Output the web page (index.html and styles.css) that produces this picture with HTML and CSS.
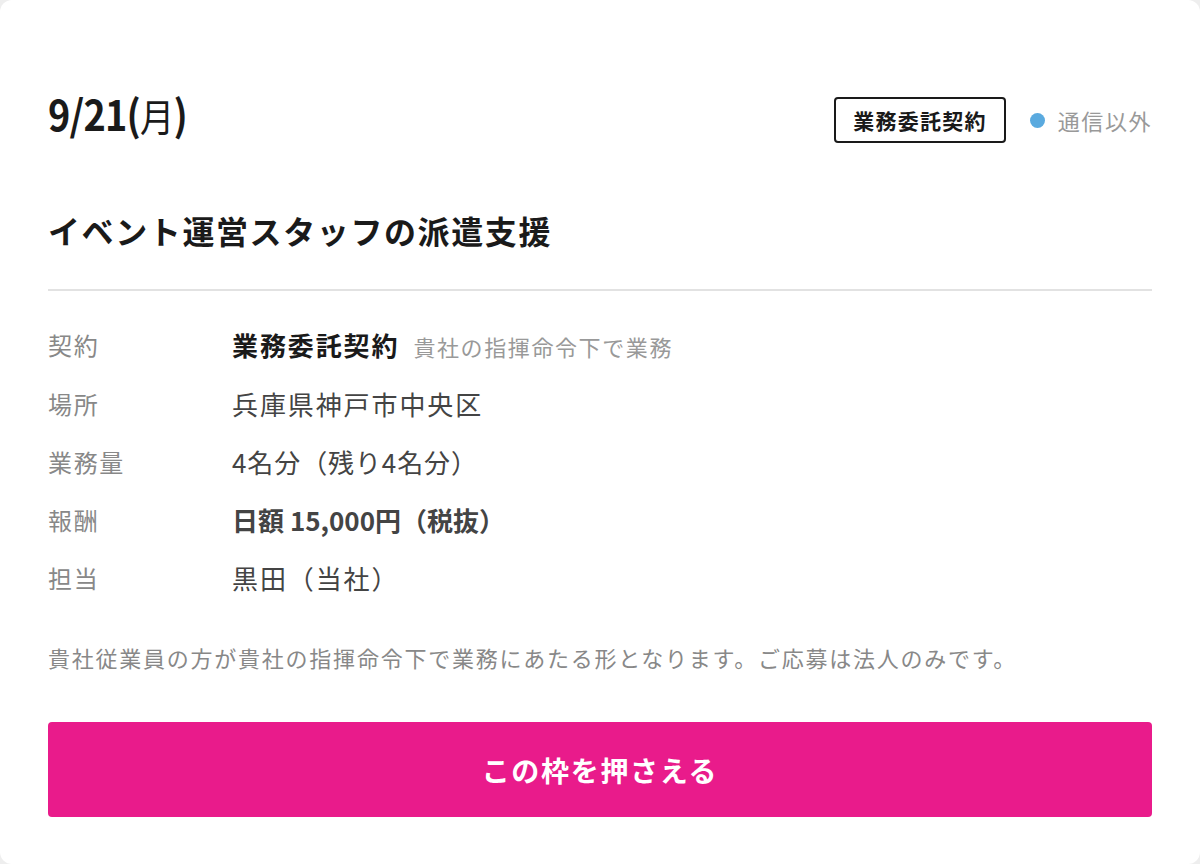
FILE: index.html
```html
<!DOCTYPE html>
<html lang="ja">
<head>
    <meta charset="UTF-8">
    <meta name="viewport" content="width=device-width, initial-scale=1.0">
    <title>枠の詳細</title>
    <link rel="stylesheet" href="styles.css">
</head>
<body>

<div class="card">
    <div class="card-head">
        <h2 class="date"><span class="date-text">9/21(<span class="dow">月</span>)</span></h2>
        <div class="tags">
            <span class="badge">業務委託契約</span>
            <span class="status"><i class="dot"></i>通信以外</span>
        </div>
    </div>

    <h3 class="title">イベント運営スタッフの派遣支援</h3>

    <dl class="details">
        <dt>契約</dt>
        <dd><strong class="strong">業務委託契約</strong><span class="sub">貴社の指揮命令下で業務</span></dd>

        <dt>場所</dt>
        <dd>兵庫県神戸市中央区</dd>

        <dt>業務量</dt>
        <dd class="count">4名分（残り4名分）</dd>

        <dt>報酬</dt>
        <dd class="pay">日額 15,000円（税抜）</dd>

        <dt>担当</dt>
        <dd>黒田（当社）</dd>
    </dl>

    <p class="note">貴社従業員の方が貴社の指揮命令下で業務にあたる形となります。ご応募は法人のみです。</p>

    <button type="button" class="btn">この枠を押さえる</button>
</div>

</body>
</html>
```

FILE: styles.css
```css
body {
    margin: 0;
    background-color: #eeeeee;
    font-family: 'Noto Sans CJK JP', sans-serif;
    color: #333;
}

.card {
    box-sizing: border-box;
    height: 864px;
    background-color: #fff;
    border-radius: 12px;
    padding: 97px 48px 48px;
}

.card-head {
    display: flex;
    justify-content: space-between;
    align-items: center;
    height: 46px;
}

.date {
    margin: -14px 0 0;
    font-size: 42px;
    font-weight: 700;
    line-height: 1;
    color: #1a1a1a;
}

/* condensed look for the date */
.date-text {
    display: inline-block;
    transform: scaleX(0.9);
    transform-origin: left center;
    letter-spacing: -0.02em;
}

.date .dow {
    font-size: 38px;
    font-weight: 400;
}

.tags {
    display: flex;
    align-items: center;
    gap: 24px;
}

.badge {
    box-sizing: border-box;
    height: 46px;
    display: flex;
    align-items: center;
    padding: 0 17px;
    border: 2px solid #1a1a1a;
    border-radius: 4px;
    font-size: 21px;
    font-weight: 700;
    letter-spacing: 0.06em;
    color: #1a1a1a;
}

.status {
    display: flex;
    align-items: center;
    gap: 13px;
    font-size: 22px;
    letter-spacing: 0.07em;
    color: #999;
}

.dot {
    width: 15px;
    height: 15px;
    border-radius: 50%;
    background-color: #5aaadf;
}

.title {
    margin: 63px 0 0;
    font-size: 32px;
    font-weight: 700;
    line-height: 48px;
    letter-spacing: 0.05em;
    color: #1a1a1a;
    padding-bottom: 35px;
    border-bottom: 2px solid #e2e2e2;
}

.details {
    display: grid;
    grid-template-columns: 184px 1fr;
    row-gap: 18px;
    margin: 34px 0 0;
    line-height: 40px;
}

.details dt {
    font-size: 24px;
    letter-spacing: 0.07em;
    color: #888;
}

.details dd {
    margin: 0;
    font-size: 26px;
    letter-spacing: 1.9px;
    color: #444;
}

.strong {
    font-weight: 700;
    color: #1a1a1a;
    margin-right: 14px;
}

.sub {
    font-size: 22px;
    letter-spacing: 1.6px;
    color: #999;
}

.details .count {
    letter-spacing: 0.9px;
}

.details .pay {
    font-weight: 700;
    letter-spacing: 0;
}

.note {
    margin: 41px 0 0;
    font-size: 22px;
    line-height: 36px;
    letter-spacing: 0.08em;
    color: #888;
}

.btn {
    display: block;
    width: 100%;
    height: 95px;
    margin-top: 47px;
    border: none;
    border-radius: 4px;
    background-color: #e91b8b;
    color: #fff;
    font-family: 'Noto Sans CJK JP', sans-serif;
    font-size: 28px;
    font-weight: 700;
    letter-spacing: 0.06em;
}
```
